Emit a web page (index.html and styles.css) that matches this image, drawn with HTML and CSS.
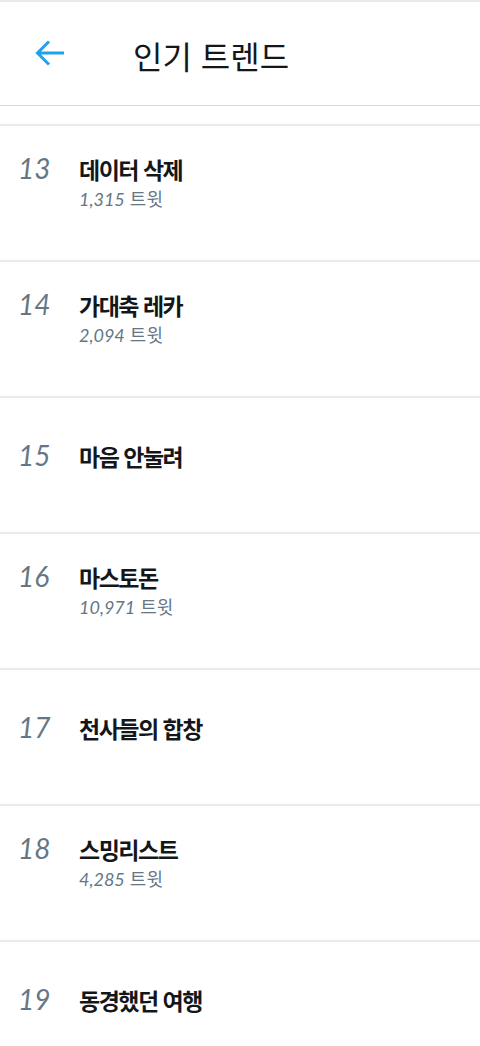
FILE: index.html
```html
<!DOCTYPE html>
<html lang="ko">
<head>
<meta charset="utf-8">
<title>인기 트렌드</title>
<link rel="stylesheet" href="styles.css">
</head>
<body>
<div class="topline"></div>
<header class="header">
  <svg class="back" width="30" height="30" viewBox="0 0 30 30" aria-hidden="true">
    <path d="M29 15H3M14 3.5L2.5 15 14 26.5" fill="none" stroke="#1da1f2" stroke-width="3" stroke-linecap="butt" stroke-linejoin="miter"/>
  </svg>
  <h1 class="header-title">인기 트렌드</h1>
</header>
<div class="spacer"></div>
<ul class="list">
  <li class="item">
    <span class="rank">13</span>
    <div class="content"><div class="title">데이터 삭제</div><div class="count"><span class="num">1,315</span> 트윗</div></div>
  </li>
  <li class="item">
    <span class="rank">14</span>
    <div class="content"><div class="title">가대축 레카</div><div class="count"><span class="num">2,094</span> 트윗</div></div>
  </li>
  <li class="item item-single">
    <span class="rank">15</span>
    <div class="content"><div class="title">마음 안눌려</div></div>
  </li>
  <li class="item">
    <span class="rank">16</span>
    <div class="content"><div class="title">마스토돈</div><div class="count"><span class="num">10,971</span> 트윗</div></div>
  </li>
  <li class="item item-single">
    <span class="rank">17</span>
    <div class="content"><div class="title">천사들의 합창</div></div>
  </li>
  <li class="item">
    <span class="rank">18</span>
    <div class="content"><div class="title">스밍리스트</div><div class="count"><span class="num">4,285</span> 트윗</div></div>
  </li>
  <li class="item item-single">
    <span class="rank">19</span>
    <div class="content"><div class="title">동경했던 여행</div></div>
  </li>
</ul>
</body>
</html>
```

FILE: styles.css
```css
html, body {
  margin: 0;
  padding: 0;
  background: #ffffff;
}
body {
  font-family: "Noto Sans CJK KR", "Noto Sans", sans-serif;
  color: #14171a;
  overflow: hidden;
}
.topline {
  height: 2px;
  background: #e6ecf0;
}
.header {
  height: 103px;
  display: flex;
  align-items: center;
  padding-left: 35px;
  border-bottom: 1px solid #d3dce3;
  box-sizing: content-box;
}
.back {
  display: block;
  flex: none;
  margin-top: -2px;
}
.header-title {
  margin: 2px 0 0 68px;
  font-size: 32px;
  font-weight: 400;
  line-height: 40px;
  color: #14171a;
}
.spacer {
  height: 18px;
  border-bottom: 2px solid #e6ecf0;
}
.list {
  list-style: none;
  margin: 0;
  padding: 0;
}
.item {
  height: 134px;
  box-sizing: content-box;
  border-bottom: 2px solid #e6ecf0;
  display: flex;
  align-items: baseline;
  padding: 0 0 0 18px;
}
.item > * {
  margin-top: 27px;
}
.item-single > * {
  margin-top: 42px;
}
.rank {
  width: 61px;
  flex: none;
  font-family: Lato, "Liberation Sans", sans-serif;
  font-size: 28px;
  font-weight: 400;
  font-style: italic;
  color: #657786;
  line-height: 30px;
}
.title {
  font-size: 23px;
  font-weight: 700;
  line-height: 30px;
  letter-spacing: -1.5px;
  color: #14171a;
}
.count {
  margin-top: 2px;
  font-family: "Noto Sans CJK KR", sans-serif;
  font-size: 18px;
  font-weight: 400;
  line-height: 24px;
  color: #657786;
}
.num {
  font-family: Lato, sans-serif;
  font-style: italic;
}
```
